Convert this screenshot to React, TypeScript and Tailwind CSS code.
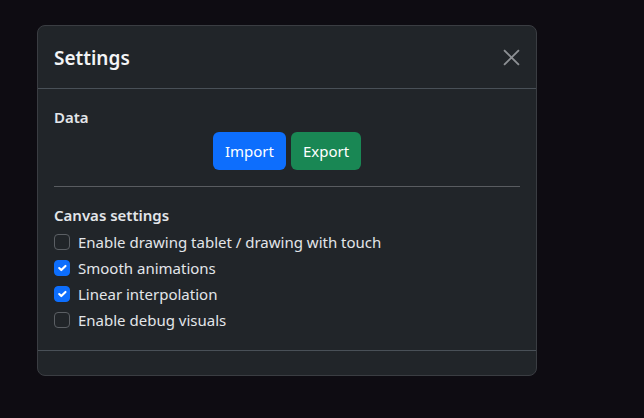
interface CheckRowProps {
  label: string;
  checked?: boolean;
}

function CheckRow({ label, checked = false }: CheckRowProps) {
  return (
    <label className="flex items-center h-6 mb-[2px] cursor-pointer">
      <span
        className={[
          'w-4 h-4 rounded-[4px] border flex items-center justify-center shrink-0',
          checked ? 'bg-[#0d6efd] border-[#0d6efd]' : 'bg-[#212529] border-[#5b5f64]',
        ].join(' ')}
      >
        {checked && (
          <svg viewBox="0 0 20 20" className="w-4 h-4">
            <path
              d="m6 10 3 3 6-6"
              fill="none"
              stroke="#fff"
              strokeWidth="3"
              strokeLinecap="round"
              strokeLinejoin="round"
            />
          </svg>
        )}
      </span>
      <span className="ml-2 text-[15px] leading-6 text-[#e3e6e9]">{label}</span>
    </label>
  );
}

export default function App() {
  return (
    <div
      className="w-[644px] h-[418px] bg-[#0e0c12] pt-[25px] pl-[37px]"
      style={{ fontFamily: '"Noto Sans", "Liberation Sans", sans-serif' }}
    >
      <div className="w-[500px] bg-[#212529] border border-[#3a3d42] rounded-[8px] text-[#e3e6e9]">
        {/* header */}
        <div className="flex items-center justify-between h-[63px] px-4 border-b border-[#495057]">
          <h5 className="text-[19px] leading-[30px] font-semibold text-[#f3f4f6] mt-[1px]">Settings</h5>
          <button type="button" aria-label="Close" className="mt-[1px]">
            <svg viewBox="0 0 16 16" className="w-[17px] h-[17px] block">
              <path d="M1 1 15 15M15 1 1 15" stroke="#8d9094" strokeWidth="1.8" />
            </svg>
          </button>
        </div>

        {/* body */}
        <div className="p-4">
          <div className="text-[15px] leading-6 font-semibold mb-[3px]">Data</div>
          <div className="flex justify-center gap-[5px]">
            <button
              type="button"
              className="h-[38px] px-3 rounded-[6px] bg-[#0d6efd] text-white text-[15px]"
            >
              Import
            </button>
            <button
              type="button"
              className="h-[38px] px-3 rounded-[6px] bg-[#198754] text-white text-[15px]"
            >
              Export
            </button>
          </div>

          <hr className="my-4 border-0 border-t border-[#595c60]" />

          <div className="text-[15px] leading-6 font-semibold mb-[3px]">Canvas settings</div>
          <CheckRow label="Enable drawing tablet / drawing with touch" />
          <CheckRow label="Smooth animations" checked />
          <CheckRow label="Linear interpolation" checked />
          <CheckRow label="Enable debug visuals" />
        </div>

        {/* footer */}
        <div className="h-[25px] border-t border-[#495057]" />
      </div>
    </div>
  );
}
